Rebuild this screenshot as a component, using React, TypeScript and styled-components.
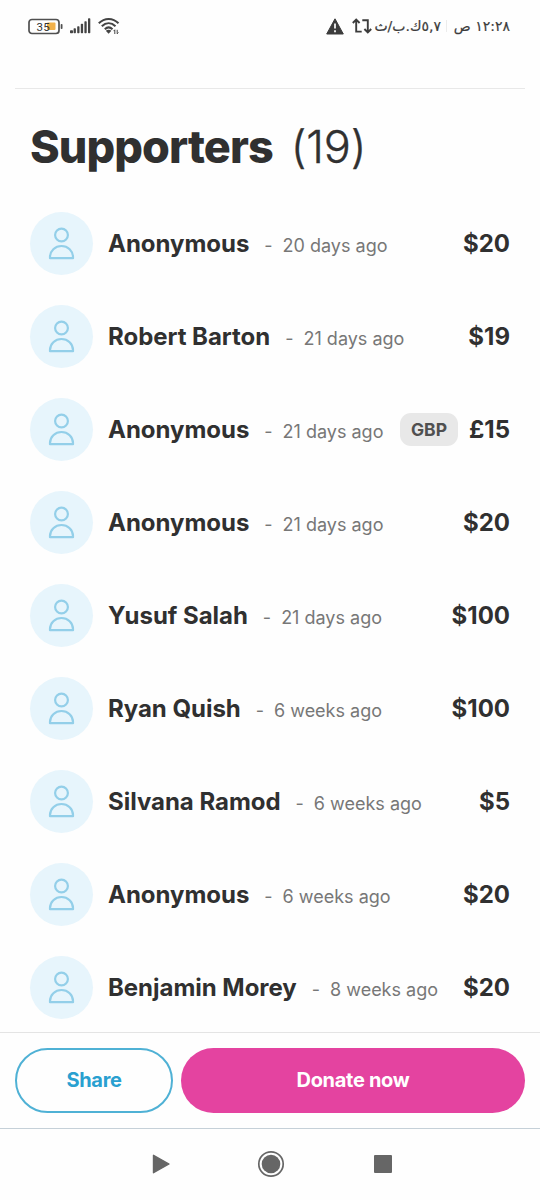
import React from "react";
import styled, { createGlobalStyle } from "styled-components";

const GlobalStyle = createGlobalStyle`
  * { box-sizing: border-box; }
  body { margin: 0; background: #fefefe; font-family: Inter, sans-serif; color: #303030; }
`;

const Screen = styled.div`
  width: 540px;
  height: 1200px;
  display: flex;
  flex-direction: column;
  overflow: hidden;
  background: #fefefe;
`;

const StatusBar = styled.header`
  height: 88px;
  flex: none;
  padding: 14px 30px 0 28px;
  display: flex;
  justify-content: space-between;
  align-items: flex-start;
  color: #3c3c3c;
`;

const StatusGroup = styled.div<{ $gap: number }>`
  height: 24px;
  display: flex;
  align-items: center;
  gap: ${(p) => p.$gap}px;
`;

const StatusText = styled.span<{ $size: number; $width: number }>`
  width: ${(p) => p.$width}px;
  font: ${(p) => p.$size}px/24px "DejaVu Sans", sans-serif;
  white-space: nowrap;
  display: flex;
  justify-content: flex-start;
  -webkit-text-stroke: 0.2px currentColor;
`;

const StatusIcons = styled.div`
  display: flex;
  align-items: center;
  gap: 8px;
`;

const Separator = styled.span`
  width: 1px;
  height: 12px;
  background: #ececec;
`;

const Main = styled.main`
  flex: 1;
  min-height: 0;
  margin: 0 15px;
  padding: 0 15px;
  border-top: 1px solid #e8e8e8;
`;

const Heading = styled.h1`
  height: 54px;
  margin: 31px 0 38px;
  display: flex;
  align-items: center;
  gap: 18px;
  font-size: 45px;
  line-height: 54px;
  font-weight: 800;
  letter-spacing: -0.9px;
`;

const Count = styled.span`
  font-weight: 300;
  letter-spacing: -0.2px;
  -webkit-text-stroke: 0.4px currentColor;
`;

const List = styled.ul`
  list-style: none;
  margin: 0;
  padding: 0;
  display: flex;
  flex-direction: column;
  gap: 30px;
`;

const Row = styled.li`
  height: 63px;
  display: flex;
  align-items: center;
`;

const Avatar = styled.div`
  width: 63px;
  height: 63px;
  flex: none;
  margin-right: 15px;
  border-radius: 50%;
  background: #e7f5fc;
  display: flex;
  align-items: center;
  justify-content: center;
`;

const Name = styled.span`
  font-size: 24px;
  line-height: 32px;
  font-weight: 700;
  letter-spacing: -0.03px;
  white-space: nowrap;
`;

const Time = styled.span`
  margin: 5px 0 0 15px;
  display: flex;
  gap: 10px;
  font-size: 18px;
  line-height: 24px;
  color: #777;
  white-space: nowrap;
`;

const Currency = styled.span`
  width: 58px;
  height: 33px;
  margin: 0 11px 0 auto;
  border-radius: 11px;
  background: #e8e8e8;
  color: #505050;
  font-size: 17.5px;
  line-height: 33px;
  font-weight: 700;
  text-align: center;
`;

const Amount = styled.span<{ $push: boolean }>`
  margin-left: ${(p) => (p.$push ? "auto" : "0")};
  font-size: 24px;
  line-height: 32px;
  font-weight: 700;
`;

const Actions = styled.footer`
  height: 97px;
  flex: none;
  display: flex;
  gap: 8px;
  padding: 15px 15px 0;
  border-top: 1px solid #e4e4e4;
  border-bottom: 1px solid #c5d0d8;
`;

const Button = styled.button<{ $primary?: boolean }>`
  flex: ${(p) => (p.$primary ? "1" : "0 0 158px")};
  height: 65px;
  padding: 0 0 2px;
  border: ${(p) => (p.$primary ? "0" : "2px solid #4fb1d5")};
  border-radius: 33px;
  background: ${(p) => (p.$primary ? "#e443a0" : "transparent")};
  color: ${(p) => (p.$primary ? "#fff" : "#29a0d0")};
  font: 700 20px Inter, sans-serif;
  letter-spacing: -0.3px;
`;

const SystemNav = styled.nav`
  height: 71px;
  flex: none;
  display: flex;
  align-items: center;
  padding: 0 0 1px 152px;
  gap: 86px;

  svg:last-child {
    margin-left: 3px;
  }
`;

const BatteryIcon = () => (
  <svg width="35" height="17" viewBox="0 0 35 17">
    <rect x="1" y="1.5" width="30" height="14" rx="3" fill="none" stroke="#505050" strokeWidth="1.7" />
    <rect x="19" y="4.5" width="8.5" height="7.5" rx="1" fill="#f2b14a" />
    <rect x="32.7" y="6" width="1.8" height="5" rx="0.8" fill="#505050" />
    <text x="8.6" y="12.6" fontFamily="Roboto, sans-serif" fontSize="11.5" letterSpacing="0.2" fill="#333">35</text>
  </svg>
);

const SignalIcon = () => (
  <svg width="21" height="16" viewBox="0 0 21 16" fill="#444">
    {[3, 5, 7, 9.5, 12, 15].map((h, i) => (
      <rect key={h} x={i * 3.6} y={15.3 - h} width={i ? 2.3 : 3} height={h} rx="0.7" />
    ))}
  </svg>
);

const WifiIcon = () => (
  <svg width="22" height="18" viewBox="0 0 22 18" fill="none" stroke="#444" strokeWidth="2">
    <path d="M.8 6.3C6.5.4 14.8.4 20.5 6.3M3.8 9.3C8 5.2 13.3 5.2 17.5 9.3M6.8 12.2c2.3-2.2 5.4-2.2 7.7 0" />
    <path d="m7.8 13.8 2.8 3 2.8-3c-1.6-1.3-4-1.3-5.6 0Z" fill="#444" stroke="none" />
    <path d="M16.8 17v-4.2l-1.2 1.3M19.2 12.8v4l1.2-1.3" strokeWidth="1" />
  </svg>
);

const WarningIcon = () => (
  <svg width="18" height="17" viewBox="0 0 18 17">
    <path d="M9 .8 17.3 16H.7Z" fill="#3c3c3c" stroke="#3c3c3c" strokeLinejoin="round" />
    <path d="M9 5.5v5M9 12.2v2" stroke="#fff" strokeWidth="1.7" />
  </svg>
);

const RepeatIcon = () => (
  <svg width="20" height="16" viewBox="0 0 20 16" fill="none" stroke="#3c3c3c" strokeWidth="1.9">
    <path d="M.8 5 4.2 1.6 7.6 5M4.2 2v11.6h5.5M12.4 11l3.4 3.4 3.4-3.4M15.8 14V2.2h-5.5" />
  </svg>
);

const PersonIcon = () => (
  <svg width="27" height="33" viewBox="0 0 27 33" fill="none" stroke="#93cfe9" strokeWidth="2.2">
    <circle cx="13.5" cy="8" r="6.4" />
    <path d="M2 31.2v-1.1C2 23.8 7.1 19 13.5 19S25 23.8 25 30.1v1.1Z" strokeLinejoin="round" />
  </svg>
);

const BackIcon = () => (
  <svg width="19" height="20" viewBox="0 0 19 20">
    <path d="M1.5 1.3v17.4L17 10Z" fill="#666" stroke="#666" strokeWidth="1.4" strokeLinejoin="round" />
  </svg>
);

const HomeIcon = () => (
  <svg width="28" height="28" viewBox="0 0 28 28">
    <circle cx="14" cy="14" r="12.2" fill="none" stroke="#666" strokeWidth="1.7" />
    <circle cx="14" cy="14" r="9.3" fill="#666" />
  </svg>
);

const RecentIcon = () => (
  <svg width="18" height="18" viewBox="0 0 18 18">
    <rect width="18" height="18" rx="1" fill="#666" />
  </svg>
);

type Supporter = { name: string; time: string; amount: string; currency?: string };

const supporters: Supporter[] = [
  { name: "Anonymous", time: "20 days ago", amount: "$20" },
  { name: "Robert Barton", time: "21 days ago", amount: "$19" },
  { name: "Anonymous", time: "21 days ago", amount: "£15", currency: "GBP" },
  { name: "Anonymous", time: "21 days ago", amount: "$20" },
  { name: "Yusuf Salah", time: "21 days ago", amount: "$100" },
  { name: "Ryan Quish", time: "6 weeks ago", amount: "$100" },
  { name: "Silvana Ramod", time: "6 weeks ago", amount: "$5" },
  { name: "Anonymous", time: "6 weeks ago", amount: "$20" },
  { name: "Benjamin Morey", time: "8 weeks ago", amount: "$20" },
];

export default function App() {
  return (
    <Screen>
      <GlobalStyle />
      <StatusBar>
        <StatusGroup $gap={7}>
          <BatteryIcon />
          <SignalIcon />
          <WifiIcon />
        </StatusGroup>
        <StatusGroup $gap={5} dir="rtl">
          <StatusText $size={14} $width={58}>١٢:٢٨ ص</StatusText>
          <Separator />
          <StatusText $size={14} $width={64}>٥,٧ك.ب/ث</StatusText>
          <StatusIcons>
            <RepeatIcon />
            <WarningIcon />
          </StatusIcons>
        </StatusGroup>
      </StatusBar>
      <Main>
        <Heading>
          Supporters <Count>(19)</Count>
        </Heading>
        <List>
          {supporters.map((s, i) => (
            <Row key={i}>
              <Avatar>
                <PersonIcon />
              </Avatar>
              <Name>{s.name}</Name>
              <Time>
                <span>-</span>
                <span>{s.time}</span>
              </Time>
              {s.currency && <Currency>{s.currency}</Currency>}
              <Amount $push={!s.currency}>{s.amount}</Amount>
            </Row>
          ))}
        </List>
      </Main>
      <Actions>
        <Button>Share</Button>
        <Button $primary>Donate now</Button>
      </Actions>
      <SystemNav>
        <BackIcon />
        <HomeIcon />
        <RecentIcon />
      </SystemNav>
    </Screen>
  );
}
